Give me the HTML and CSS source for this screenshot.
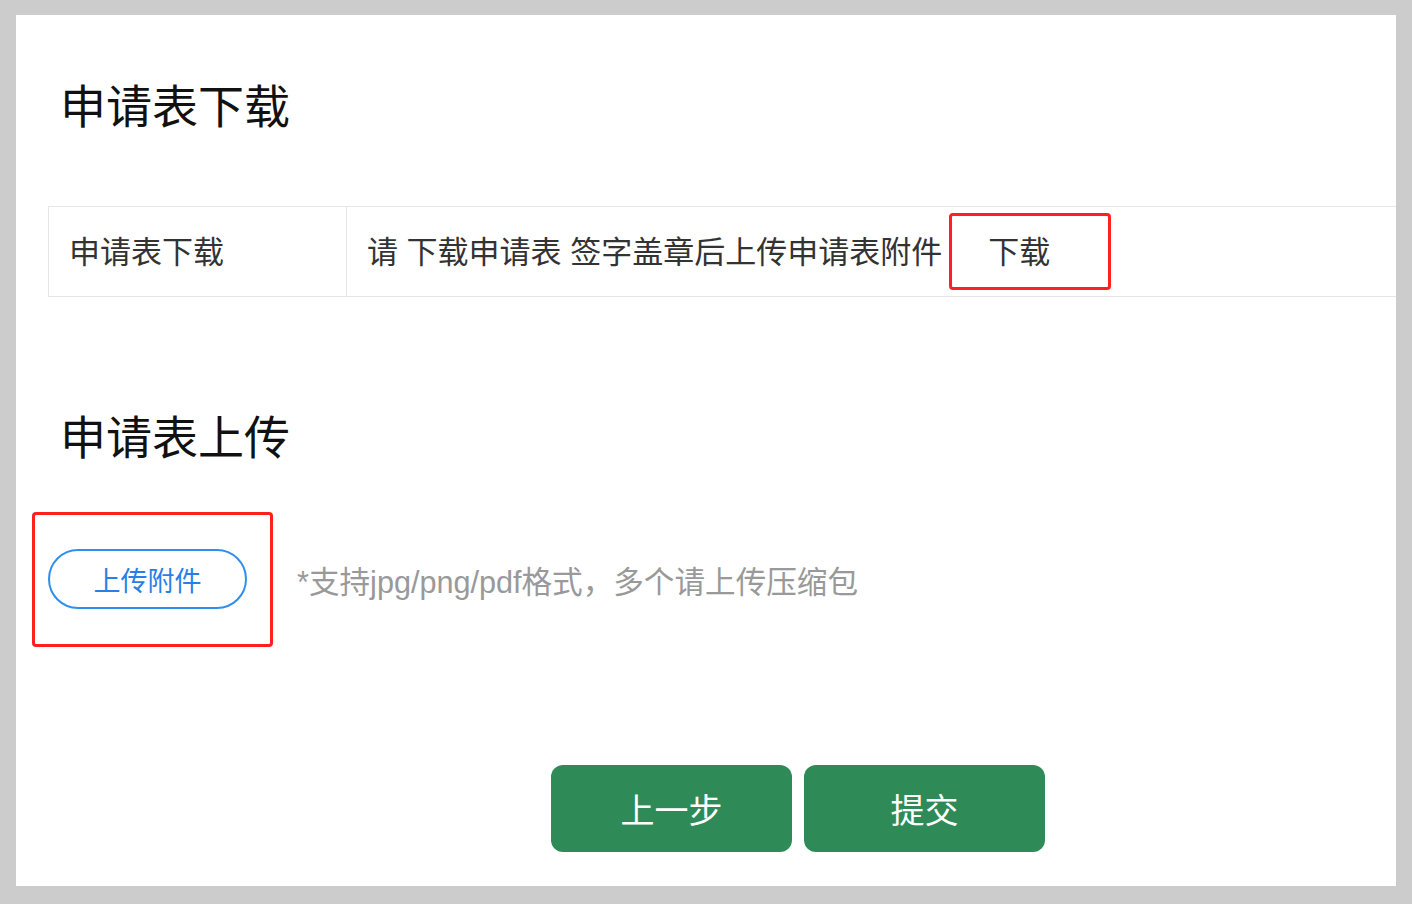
FILE: index.html
```html
<!DOCTYPE html>
<html lang="zh-CN">
<head>
<meta charset="utf-8">
<title>申请表</title>
<link rel="stylesheet" href="styles.css">
</head>
<body>
<div class="page">
  <div class="panel">
    <h2 class="title title-download">申请表下载</h2>
    <div class="table">
      <div class="cell cell-label">申请表下载</div>
      <div class="cell cell-value">
        <span class="desc">请 下载申请表 签字盖章后上传申请表附件</span>
        <a class="download-box" href="#">下载</a>
      </div>
    </div>

    <h2 class="title title-upload">申请表上传</h2>
    <div class="upload-row">
      <div class="highlight">
        <button class="pill" type="button">上传附件</button>
      </div>
      <span class="hint">*支持jpg/png/pdf格式，多个请上传压缩包</span>
    </div>

    <div class="actions">
      <button class="btn" type="button">上一步</button>
      <button class="btn" type="button">提交</button>
    </div>
  </div>
</div>
</body>
</html>
```

FILE: styles.css
```css
html, body {
  margin: 0;
  padding: 0;
}

body {
  background: #cccccc;
  font-family: "Liberation Sans", "Noto Sans CJK SC", sans-serif;
  color: #333333;
}

.page {
  height: 904px;
  box-sizing: border-box;
  padding: 15px 16px 18px 16px;
}

.panel {
  background: #ffffff;
  height: 871px;
  box-sizing: border-box;
  padding: 65px 0 0 32px;
  overflow: hidden;
}

.title {
  margin: 0;
  font-family: "Noto Sans CJK SC", sans-serif;
  font-weight: 400;
  font-size: 46px;
  line-height: 46px;
  color: #111111;
  padding-left: 12px;
}

.title-upload {
  margin-top: 114px;
}

.table {
  margin-top: 80px;
  display: flex;
  border-top: 1px solid #e6e6e6;
  border-bottom: 1px solid #e6e6e6;
  border-left: 1px solid #e6e6e6;
  height: 91px;
  box-sizing: border-box;
}

.cell {
  display: flex;
  align-items: center;
  font-family: "Liberation Sans", "Noto Sans CJK SC", sans-serif;
  font-size: 31px;
  color: #333333;
  padding-left: 20px;
  padding-bottom: 5px;
  box-sizing: border-box;
}

.cell-label {
  width: 298px;
  border-right: 1px solid #e6e6e6;
}

.cell-value {
  flex: 1;
}

.download-box {
  margin-left: 7px;
  margin-top: 5px;
  width: 162px;
  height: 77px;
  box-sizing: border-box;
  border: 3px solid #ff2020;
  border-radius: 4px;
  padding-left: 36px;
  padding-bottom: 5px;
  display: flex;
  align-items: center;
  color: #333333;
  text-decoration: none;
  font-size: 31px;
}

.upload-row {
  display: flex;
  align-items: center;
  margin-top: 55px;
}

.highlight {
  margin-left: -16px;
  width: 241px;
  height: 135px;
  box-sizing: border-box;
  border: 3px solid #ff2020;
  border-radius: 4px;
  padding: 34px 0 0 13px;
}

.pill {
  width: 199px;
  height: 60px;
  box-sizing: border-box;
  border: 2px solid #2f8ff0;
  border-radius: 30px;
  background: #ffffff;
  color: #2a7fe6;
  font-family: "Noto Sans CJK SC", sans-serif;
  font-size: 27px;
  padding: 0;
  margin: 0;
}

.hint {
  margin-left: 24px;
  font-size: 30.6px;
  color: #999999;
}

.actions {
  display: flex;
  gap: 12px;
  margin-top: 118px;
  padding-left: 503px;
}

.btn {
  width: 241px;
  height: 87px;
  border: none;
  border-radius: 12px;
  background: #2e8b57;
  color: #ffffff;
  font-family: "Noto Sans CJK SC", sans-serif;
  font-size: 34px;
  margin: 0;
  padding: 0;
}
```
